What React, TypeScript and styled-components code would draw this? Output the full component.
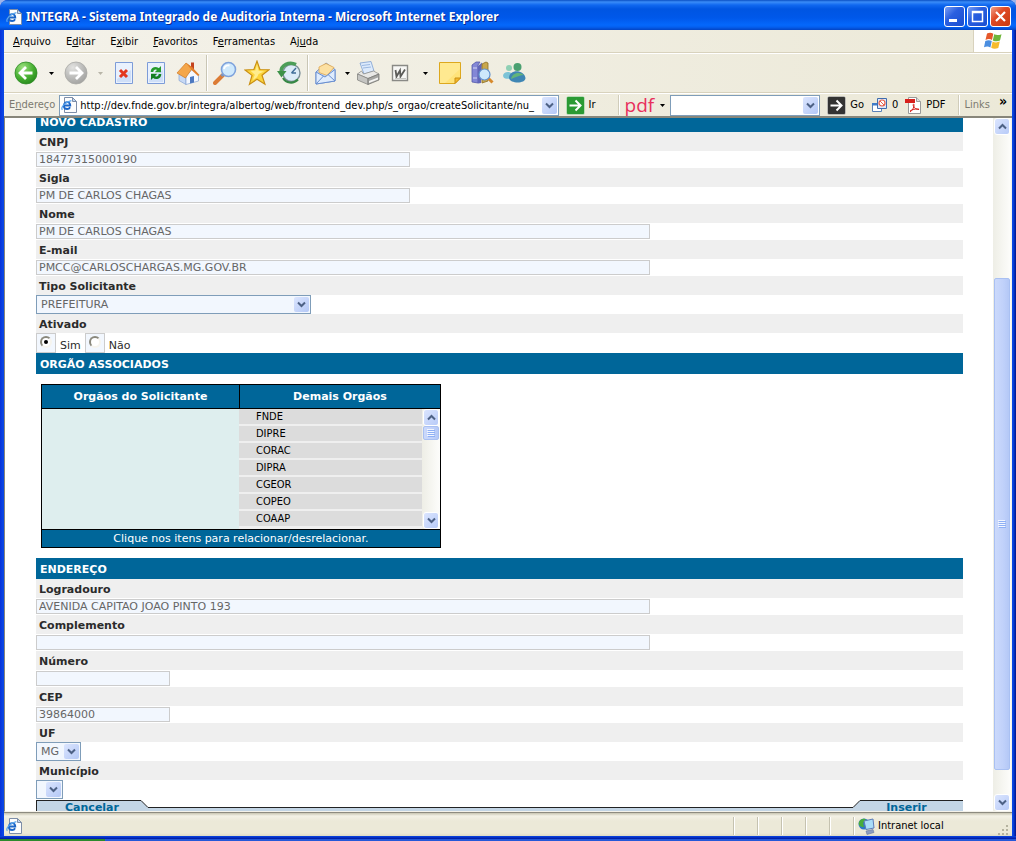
import React from "react";
import styled, { createGlobalStyle, css } from "styled-components";

const uiFont = '"DejaVu Sans Condensed", "DejaVu Sans", sans-serif';
const pageFont = '"DejaVu Sans", sans-serif';
const blue = "#006699";

const GlobalStyle = createGlobalStyle`
  *, *::before, *::after { box-sizing: border-box; }
  body { margin: 0; background: #9db4ea; }
  button, input, select { margin: 0; padding: 0; border: 0; border-radius: 0; font: inherit; color: inherit; background: none; outline: none; }
  ul { margin: 0; padding: 0; list-style: none; }
`;

/* ---------- window frame ---------- */

const Desktop = styled.div`
  height: 100vh;
  min-height: 400px;
  display: flex;
  flex-direction: column;
  overflow: hidden;
`;

const Window = styled.div`
  flex: 1;
  min-height: 0;
  display: flex;
  flex-direction: column;
  border-radius: 8px 8px 0 0;
  overflow: hidden;
  background: linear-gradient(90deg, #0831d9, #0a46e4 3px, #0a46e4 calc(100% - 3px), #00138c);
  font: 11px/14px ${uiFont};
  color: #000;
`;

const TitleBar = styled.header`
  flex: none;
  height: 30px;
  display: flex;
  align-items: center;
  gap: 4px;
  padding: 3px 5px 0 6px;
  background: linear-gradient(#0a4fc4 0, #3a8cf8 2px, #1068f0 5px, #0055e2 9px, #0058ea 18px, #0468fc 25px, #0460f0 27px, #0344c4 30px);
`;

const Title = styled.h1`
  flex: 1;
  margin: 0;
  font: bold 12px/16px "Noto Sans", sans-serif;
  color: #fff;
  text-shadow: 1px 1px 0 #0a2a90;
  white-space: nowrap;
`;

const WindowButtons = styled.div`
  display: flex;
  gap: 2px;
`;

const WindowButton = styled.button<{ $danger?: boolean }>`
  width: 21px;
  height: 21px;
  display: flex;
  border: 1px solid #fff;
  border-radius: 3px;
  background: ${(p) =>
    p.$danger
      ? "linear-gradient(135deg, #f0a088, #e04a24 40%, #c83a10)"
      : "linear-gradient(135deg, #7a9ff5, #2a5fe0 40%, #1a4ed0)"};
`;

const Frame = styled.div`
  flex: 1;
  min-height: 0;
  display: flex;
  flex-direction: column;
  margin: 0 4px;
`;

const BottomEdge = styled.div`
  flex: none;
  height: 3px;
  background: linear-gradient(#0a46e4, #0018a0);
`;

const TaskbarEdge = styled.div`
  flex: none;
  height: 2px;
  background: linear-gradient(90deg, #2c8a2c 105px, #2458d8 105px);
`;

/* ---------- bars ---------- */

const MenuBar = styled.nav`
  flex: none;
  height: 23px;
  display: flex;
  align-items: stretch;
  background: linear-gradient(90deg, #f4f2ea, #ece9d8);
  border-bottom: 1px solid #d8d2bd;
`;

const MenuItems = styled.div`
  flex: 1;
  display: flex;
  align-items: center;
  gap: 15px;
  padding: 2px 0 0 9px;
`;

const MenuItem = styled.button`
  font: 11px/14px ${uiFont};
`;

const Flag = styled.div`
  width: 39px;
  display: flex;
  align-items: center;
  justify-content: center;
  background: #fff;
  border-left: 1px solid #d8d2bd;
`;

const ToolBar = styled.div`
  flex: none;
  height: 40px;
  display: flex;
  align-items: center;
  padding-left: 6px;
  background: linear-gradient(90deg, #f4f2ea, #ece9d8);
  border-top: 1px solid #fff;
  border-bottom: 1px solid #d8d2bd;
`;

const ToolButton = styled.button`
  flex: none;
  width: 32px;
  height: 32px;
  display: flex;
  align-items: center;
  justify-content: center;
`;

const CaretButton = styled.button<{ $width: number; $off?: boolean }>`
  flex: none;
  width: ${(p) => p.$width}px;
  height: 24px;
  display: flex;
  align-items: center;
  justify-content: center;
  color: ${(p) => (p.$off ? "#b8b5a8" : "#000")};
`;

const ToolRule = styled.span`
  flex: none;
  width: 5px;
  height: 36px;
  background: linear-gradient(90deg, transparent 2px, #c9c6b5 2px, #c9c6b5 3px, #fff 3px, #fff 4px, transparent 4px);
`;

const AddressBar = styled.form`
  flex: none;
  height: 25px;
  display: flex;
  align-items: center;
  background: linear-gradient(90deg, #f2f0e6, #ece9d8);
  border-top: 1px solid #fff;
  border-bottom: 2px solid #88867a;
  white-space: nowrap;
`;

const DimText = styled.label`
  padding: 0 4px 0 5px;
  color: #7c7a70;
`;

const Combo = styled.div<{ $width?: number }>`
  ${(p) => (p.$width ? css`flex: none; width: ${p.$width}px;` : css`flex: 1; min-width: 0;`)}
  height: 21px;
  display: flex;
  align-items: center;
  padding: 1px;
  background: #fff;
  border: 1px solid #7f9db9;
`;

const ComboInput = styled.input`
  flex: 1;
  min-width: 0;
  height: 17px;
  padding-left: 3px;
`;

const DropArrow = styled.span`
  flex: none;
  width: 15px;
  height: 17px;
  display: flex;
  align-items: center;
  justify-content: center;
  border-radius: 2px;
  background: linear-gradient(135deg, #dbe5fe, #b4c8f6);
  color: #4d6185;
`;

const BarButton = styled.button`
  flex: none;
  display: flex;
  align-items: center;
  gap: 4px;
  padding-left: 7px;
`;

const PdfBrand = styled.button`
  font: 19px/20px "Open Sans", sans-serif;
  height: 24px;
  padding-left: 5px;
  color: #e8305c;
`;

const BarRule = styled.span<{ $before: number }>`
  flex: none;
  width: 2px;
  height: 20px;
  margin-left: ${(p) => p.$before}px;
  border-left: 1px solid #d0ccba;
  border-right: 1px solid #fff;
`;

const More = styled.button`
  align-self: flex-start;
  width: 18px;
  font-size: 14px;
  font-weight: bold;
  line-height: 14px;
`;

const StatusBar = styled.footer`
  flex: none;
  height: 24px;
  display: flex;
  align-items: center;
  padding: 3px 3px 0 2px;
  background: linear-gradient(#c8c5b2, #f3f1e6 3px, #ece9d8 8px, #ece9d8 20px, #dedac6);
  border-top: 1px solid #8d8b80;
`;

const StatusMain = styled.div`
  flex: 1;
  display: flex;
`;

const StatusCell = styled.div<{ $width: number }>`
  width: ${(p) => p.$width}px;
  height: 18px;
  display: flex;
  align-items: center;
  gap: 3px;
  padding-left: 4px;
  border-left: 1px solid #c5c2b0;
  box-shadow: inset 1px 0 0 #fff;
  white-space: nowrap;
`;

const Grip = styled.svg`
  flex: none;
  align-self: flex-end;
  margin-left: auto;
`;

/* ---------- scrolling ---------- */

const Viewport = styled.div`
  flex: 1;
  min-height: 0;
  display: flex;
  background: #fff;
  border-left: 1px solid #88867a;
  border-right: 1px solid #f4f2ea;
  border-bottom: 1px solid #f4f2ea;
`;

const ScrollRail = styled.div`
  flex: none;
  width: 18px;
  display: flex;
  flex-direction: column;
  padding: 0 1px;
  background: linear-gradient(90deg, #eeeee6, #fdfdfb);
`;

const ScrollButton = styled.button`
  flex: none;
  height: 17px;
  display: flex;
  align-items: center;
  justify-content: center;
  border: 1px solid #fff;
  border-radius: 3px;
  background: linear-gradient(135deg, #dbe5fe, #b8cbf8);
  color: #4d6185;
`;

const RailSpace = styled.div<{ $part: number }>`
  flex: ${(p) => p.$part} 1 0;
`;

const Thumb = styled.div<{ $part: number }>`
  flex: ${(p) => p.$part} 1 0;
  min-height: 12px;
  display: flex;
  align-items: center;
  justify-content: center;
  border: 1px solid #a9c0f2;
  border-radius: 2px;
  background: linear-gradient(90deg, #cbd9fb, #c0d1fa 60%, #b4c8f6);
`;

/* ---------- page ---------- */

const Page = styled.main`
  flex: 1;
  min-width: 0;
  overflow: hidden;
  padding: 0 30px 0 31px;
  font: 11px/14px ${pageFont};
  color: #2b2b2b;
`;

const Form = styled.form`
  margin-top: -7px;
`;

const SectionTitle = styled.h2`
  height: 21px;
  margin: 0;
  padding-left: 4px;
  font: bold 11px/23px ${pageFont};
  color: #fff;
  background: ${blue};
`;

const FieldLabel = styled.label`
  display: block;
  height: 19px;
  padding-left: 3px;
  font-weight: bold;
  line-height: 21px;
  background: #efefef;
`;

const TextField = styled.input<{ $width: number }>`
  display: block;
  width: ${(p) => p.$width}px;
  max-width: 100%;
  height: 15px;
  margin: 1px 0;
  padding: 0 2px;
  border: 1px solid #ccc;
  background: #f2f7fe;
  color: #666;
`;

const SelectBox = styled.div<{ $width: number }>`
  position: relative;
  width: ${(p) => p.$width}px;
  max-width: 100%;
  height: 19px;
  border: 1px solid #7f9db9;
  background: #f2f7fe;

  select {
    display: block;
    width: 100%;
    height: 17px;
    padding: 1px 0 0 4px;
    appearance: none;
    color: #666;
  }

  ${DropArrow} {
    position: absolute;
    top: 1px;
    right: 1px;
    height: 15px;
    pointer-events: none;
  }
`;

const RadioRow = styled.div`
  height: 20px;
  display: flex;
  gap: 4px;
  line-height: 25px;
`;

const Radio = styled.input`
  position: relative;
  width: 20px;
  height: 20px;
  appearance: none;
  border: 1px solid #ccc;
  background: #f2f7fe;

  &::before {
    content: "";
    position: absolute;
    left: 3px;
    top: 2px;
    width: 12px;
    height: 12px;
    border: 2px solid #8a887c;
    border-right-color: #f6f4ee;
    border-bottom-color: #f6f4ee;
    border-radius: 50%;
    background: #fff;
  }

  &:checked::after {
    content: "";
    position: absolute;
    left: 7px;
    top: 6px;
    width: 4px;
    height: 4px;
    border-radius: 50%;
    background: #000;
  }
`;

const Picker = styled.table`
  width: 400px;
  max-width: 100%;
  margin: 10px 5px;
  border: 1px solid #000;
  border-spacing: 0;
  table-layout: fixed;

  th, td { padding: 0; vertical-align: top; }
  th { height: 23px; line-height: 23px; color: #fff; background: ${blue}; }
  th:first-child { width: 197px; }
  th + th { border-left: 1px solid #000; }
  tbody td { height: 122px; border: solid #000; border-width: 1px 0; }
  tfoot td { height: 17px; line-height: 17px; text-align: center; color: #fff; background: ${blue}; }
`;

const ChosenCell = styled.td`
  background: #deeeee;
`;

const ListPane = styled.div`
  display: flex;
  height: 120px;
`;

const List = styled.ul`
  flex: 1;
  background: #efefef;
`;

const ListItem = styled.button`
  display: block;
  width: 100%;
  height: 17px;
  padding: 1px 0 0 17px;
  border-bottom: 2px solid #efefef;
  background: #dcdcdc;
  font: 11px/14px ${uiFont};
  color: #000;
  text-align: left;
`;

const Actions = styled.div`
  display: flex;
  height: 30px;
  margin-top: 1px;
`;

const ActionTab = styled.button<{ $edge: "left" | "right" }>`
  width: ${(p) => (p.$edge === "left" ? 105 : 103)}px;
  padding: ${(p) => (p.$edge === "left" ? "0 0 0 6px" : "0 10px 0 0")};
  border-top: 1px solid #222;
  ${(p) => p.$edge === "left" && css`border-left: 1px solid #222;`}
  background: #c3d5e5;
  font: bold 11px/14px ${pageFont};
  color: ${blue};
  display: flex;
  justify-content: center;
`;

const ActionLine = styled.div`
  flex: 1;
  margin-top: 7px;
  border-top: 1px solid #222;
  background: #c3d5e5;
`;

/* ---------- drawings ---------- */

const Caret = () => (
  <svg width="5" height="3" viewBox="0 0 5 3"><path d="M0 0h5L2.500 3z" fill="currentColor" /></svg>
);

const Chevron = ({ up }: { up?: boolean }) => (
  <svg width="9" height="7" viewBox="0 0 9 7">
    <path d={up ? "M1 5.500 4.500 2 8 5.500" : "M1 1.500 4.500 5 8 1.500"} fill="none" stroke="currentColor" strokeWidth="2" />
  </svg>
);

const ThumbLines = () => (
  <svg width="8" height="8" viewBox="0 0 8 8">
    <path d="M0 .5h7M0 2.500h7M0 4.500h7M0 6.500h7" stroke="#f2f6ff" />
    <path d="M1 1.500h7M1 3.500h7M1 5.500h7M1 7.500h7" stroke="#8fb0f5" />
  </svg>
);

const IePage = () => (
  <svg width="16" height="16" viewBox="0 0 16 16">
    <path d="M3.500.5h8l4 4v11h-12z" fill="#fdfdfd" stroke="#7e8ea8" />
    <path d="M11.500.5v4h4z" fill="#bcd4f4" stroke="#7e8ea8" />
    <path d="M3 8.500h6.300c0-2-1.200-3.300-3.100-3.300S2.800 6.700 2.800 8.700s1.400 3.300 3.400 3.300c1.400 0 2.300-.6 2.900-1.700" fill="none" stroke="#1c66c8" strokeWidth="1.800" />
    <path d="M1.400 12.800c-2-2 2.500-8 9-9.200" fill="none" stroke="#5aa5ec" strokeWidth="1.200" />
  </svg>
);

const FlagIcon = () => (
  <svg width="19" height="18" viewBox="0 0 19 18">
    <path d="M3 1.500c2.500-1.300 4.500-.9 6.300.2L8 8C6.200 6.900 4 6.700 1.500 8z" fill="#e5582b" />
    <path d="M10.200 2.200c2 1 4.300 1.200 7.300 0L16 8.600c-2.700 1.200-5 .9-7.200-.2z" fill="#6fb53a" />
    <path d="M1.300 9c2.500-1.300 4.700-1 6.500.1l-1.400 6.300C4.600 14.300 2.500 14 0 15.300z" fill="#4a8ee0" />
    <path d="M8.600 9.500c2 1.100 4.300 1.300 7.200.1l-1.500 6.300c-2.800 1.200-5 1-7.100-.1z" fill="#f6bb2c" />
  </svg>
);

const RoundArrow = ({ forward }: { forward?: boolean }) => (
  <svg width="24" height="24" viewBox="0 0 24 24">
    <defs>
      <radialGradient id={forward ? "fw" : "bk"} cx=".35" cy=".25" r=".9">
        <stop offset="0" stopColor={forward ? "#e2e2e0" : "#9be07e"} />
        <stop offset=".55" stopColor={forward ? "#b9b9b7" : "#45ae30"} />
        <stop offset="1" stopColor={forward ? "#9a9a98" : "#1f7e18"} />
      </radialGradient>
    </defs>
    <circle cx="12" cy="12" r="11" fill={`url(#${forward ? "fw" : "bk"})`} stroke={forward ? "#a9a9a6" : "#2f8c26"} strokeWidth=".8" />
    <path
      d={forward ? "M5.500 12h12M12 6l6 6-6 6" : "M18.500 12h-12M12 6l-6 6 6 6"}
      fill="none" stroke="#fff" strokeWidth="2.800"
    />
  </svg>
);

const Sheet = () => (
  <>
    <path d="M3.500 1.500h17v21h-17z" fill="#e9f1fd" stroke="#7d9cd8" />
    <path d="M5 21h14V9L5 18z" fill="#cfdff8" />
  </>
);

const StopIcon = () => (
  <svg width="24" height="24" viewBox="0 0 24 24"><Sheet /><path d="m8 9 7 7m0-7-7 7" stroke="#e3371e" strokeWidth="3" /></svg>
);

const RefreshIcon = () => (
  <svg width="24" height="24" viewBox="0 0 24 24">
    <Sheet />
    <path d="M8 11c0-3.500 4-5 6.500-2.500" fill="none" stroke="#259a2c" strokeWidth="2.600" />
    <path d="M17 5v6.300h-6.300z" fill="#259a2c" />
    <path d="M16 13c0 3.500-4 5-6.500 2.500" fill="none" stroke="#158022" strokeWidth="2.600" />
    <path d="M7 19v-6.300h6.300z" fill="#158022" />
  </svg>
);

const HomeIcon = () => (
  <svg width="24" height="24" viewBox="0 0 24 24">
    <path d="M15 1.500h3v7h-3z" fill="#c4431e" />
    <path d="m3 13 7 4v6.500l-7-4z" fill="#c7d9f5" stroke="#86a3d4" strokeWidth=".7" />
    <path d="m10 15 6-6.500 6.500 5V20L10 23.500z" fill="#f4f8ff" stroke="#86a3d4" strokeWidth=".7" />
    <path d="m1 12 9-10 6.500 5L9.500 17z" fill="#f4a64a" stroke="#d07b26" strokeWidth=".7" />
    <path d="m10 2 6.500 4.500 7 7.500-1.500 1-6-5.500z" fill="#e2802b" />
    <path d="m14 16 4-1v6.500l-4 1z" fill="#4c78bf" />
  </svg>
);

const SearchIcon = () => (
  <svg width="24" height="24" viewBox="0 0 24 24">
    <path d="m10 14-8 8" stroke="#dc7c35" strokeWidth="4" strokeLinecap="round" />
    <path d="m11 12.500-2.500 2.500" stroke="#8294b8" strokeWidth="3" />
    <circle cx="15.500" cy="8.500" r="7" fill="#cfe9fc" stroke="#7fa3dc" strokeWidth="1.600" />
    <path d="M11 8c.5-2.500 3-4 5.500-3.500" fill="none" stroke="#fff" strokeWidth="2" />
  </svg>
);

const StarIcon = () => (
  <svg width="26" height="26" viewBox="0 0 24 24">
    <path d="m12 1 2.700 7.800 8.300.2-6.400 5.100 2.700 8.200L12 17.800l-7 4.700 2.400-8.300L1 9.200l8.100-.4z" fill="#fcd53c" stroke="#c98f14" strokeWidth="1.100" />
    <path d="m12 4 1.500 6 5 .5-5 2.500-1.500 3-4 2.500 2-5-4-3.500 4.500-.3z" fill="#fff2a0" opacity=".8" />
  </svg>
);

const HistoryIcon = () => (
  <svg width="24" height="24" viewBox="0 0 24 24">
    <circle cx="14.500" cy="12" r="8.500" fill="#dcebf7" stroke="#7b8f98" strokeWidth="1.400" />
    <path d="M14.500 12 19 7m-4.500 5h4.500" stroke="#3f6d98" strokeWidth="1.400" />
    <path d="M19 3.500C12 0 4 4 4 11" fill="none" stroke="#4c9e58" strokeWidth="3.500" />
    <path d="M0 10h9.500l-5 6.500z" fill="#3c9148" />
    <path d="M6 17c3 5 10 6.500 15 1.500" fill="none" stroke="#378845" strokeWidth="2.200" />
  </svg>
);

const MailIcon = () => (
  <svg width="24" height="24" viewBox="0 0 24 24">
    <path d="m2 11 10-9 9 6.500V20L2 23z" fill="#bed7f8" stroke="#6a8fd0" />
    <path d="m5 6 7-3.500 8 4-7 8-8-3z" fill="#fce0a2" stroke="#e0a64c" strokeWidth=".8" />
    <path d="m2 11 9 5 10-7.500V20L2 23z" fill="#dfecfd" stroke="#6a8fd0" />
    <path d="m2 23 7.500-8M21 20l-7-6.500" stroke="#6a8fd0" fill="none" />
  </svg>
);

const PrintIcon = () => (
  <svg width="24" height="24" viewBox="0 0 24 24">
    <path d="m4 2 11-1.500L18 10 8 13z" fill="#dceafc" stroke="#7d9fd2" strokeWidth=".8" />
    <path d="M6 4.500 14 3.500M7 7l8-1" stroke="#9bb8e0" />
    <path d="m1.500 13 4-3 2 3 10-3 5.500 3-11 4.500z" fill="#e8e8e6" stroke="#8f8f8c" strokeWidth=".8" />
    <path d="m1.500 13 10.500 4.500v6L1.500 19z" fill="#c5c5c2" stroke="#858582" strokeWidth=".8" />
    <path d="M12 17.500 23 13v6l-11 4.500z" fill="#a5a5a2" stroke="#777774" strokeWidth=".8" />
    <path d="m13 20 9-3.500v2L13 22z" fill="#f4f4f2" />
  </svg>
);

const WordIcon = () => (
  <svg width="18" height="18" viewBox="0 0 18 18">
    <path d="M1.500 1.500h15v15h-15z" fill="#f7f7f5" stroke="#8a8a86" strokeWidth="1.400" />
    <path d="M4.500 6 5.500 12.500 9 6.500 9.500 12.500 14 5.500" fill="none" stroke="#5b5b58" strokeWidth="1.800" />
    <path d="M4 14.500h11" stroke="#c4c4c0" />
  </svg>
);

const NoteIcon = () => (
  <svg width="24" height="24" viewBox="0 0 24 24">
    <path d="M1.500 1.500h21V17L17 22.500H1.500z" fill="#ffe37a" stroke="#dda81e" />
    <path d="M2 2h20v6L7 22H2z" fill="#ffeb9a" opacity=".7" />
    <path d="M22.500 17H17v5.500z" fill="#f5b92c" stroke="#c98f14" />
  </svg>
);

const ResearchIcon = () => (
  <svg width="24" height="24" viewBox="0 0 24 24">
    <path d="m2 4 4-3h4l-2 3v18l-6-1z" fill="#8387d6" stroke="#5358a8" strokeWidth=".8" />
    <path d="m8 5 4-3.500L11 22l-3 .5z" fill="#6166b8" />
    <path d="m12 3 4-2 2 1v18l-6 2z" fill="#c9a74c" stroke="#8d6f24" strokeWidth=".8" />
    <path d="M3 7h4M3 17h4" stroke="#d5d7f5" />
    <path d="m18 17 4.500 4.500" stroke="#d78a2c" strokeWidth="3" />
    <circle cx="14.500" cy="13.500" r="5.500" fill="#cde8fb" stroke="#5f8fcc" strokeWidth="1.200" />
  </svg>
);

const MessengerIcon = () => (
  <svg width="24" height="24" viewBox="0 0 24 24">
    <path d="M1 15c0-5 9-5.500 10 0 0 3-9 4.500-10 0z" fill="#7cc3d6" />
    <circle cx="7" cy="7" r="3" fill="#8fd0b4" />
    <path d="M7 17c0-9 15-9 16.500 0 0 6-15.500 6-16.500 0z" fill="#3f86b4" />
    <path d="M9 18c1-6 8-8 13-4-3 0-8 2-13 4z" fill="#62b47a" />
    <circle cx="15.500" cy="6" r="4" fill="#4aa070" />
  </svg>
);

const GoIcon = ({ fill }: { fill: string }) => (
  <svg width="19" height="19" viewBox="0 0 19 19">
    <rect x=".5" y=".5" width="18" height="18" rx="1.500" fill={fill} stroke="#fff" strokeOpacity=".4" />
    <path d="M3.500 9.500h11M9.500 4.500l5 5-5 5" fill="none" stroke="#fff" strokeWidth="2" />
  </svg>
);

const PopupIcon = () => (
  <svg width="17" height="17" viewBox="0 0 17 17">
    <path d="M1.500 6.500h9v8h-9z" fill="#fff" stroke="#5b82b8" /><path d="M1 6h10v2.500H1z" fill="#3f7cc8" />
    <path d="M6.500 1.500h9v10h-9z" fill="#dfe9f8" stroke="#3f6cae" />
    <circle cx="11" cy="6" r="3" fill="#fff" stroke="#e8604a" strokeWidth="1.200" /><path d="m9 4 4 4" stroke="#e8604a" />
  </svg>
);

const AcrobatIcon = () => (
  <svg width="17" height="17" viewBox="0 0 17 17">
    <path d="M3.500.5h8l4 4v12h-12z" fill="#fff" stroke="#9a9a9a" />
    <path d="M11.500.5v4h4" fill="#ddd" stroke="#9a9a9a" />
    <path d="M0 2h10v4H0z" fill="#d8201c" />
    <path d="M5 15c2-1 4.500-5 4-7.500-.3-1-1.300 0-.6 1.500C9.200 11 12 13 14 12.500c.5-1-6-.8-9 1.500" fill="none" stroke="#d8201c" />
  </svg>
);

const IntranetIcon = () => (
  <svg width="17" height="17" viewBox="0 0 17 17">
    <circle cx="6" cy="6" r="5.500" fill="#2c78cc" />
    <path d="M1 4C3 0 7 0 8 2L5 5l1 4C2 9 0 7 1 4z" fill="#48ac3c" />
    <path d="m6 3 9-2 1 9-8 1.500z" fill="#a9dcf8" stroke="#5c7cb8" />
    <path d="m8 13 7-1.500 1 3-7 2z" fill="#8a9bc0" stroke="#6477a0" strokeWidth=".6" />
  </svg>
);

const GripDots = () => (
  <Grip width="12" height="12" viewBox="0 0 12 12" fill="#b5b29f">
    <path d="M9 1h2v2H9zM9 5h2v2H9zM9 9h2v2H9zM5 5h2v2H5zM5 9h2v2H5zM1 9h2v2H1z" />
  </Grip>
);

const Slope = ({ down }: { down?: boolean }) => (
  <svg width="7" height="30" viewBox="0 0 7 30">
    <path d={down ? "M0 .5 7 7.500V30H0z" : "M7 .5 0 7.500V30h7z"} fill="#c3d5e5" />
    <path d={down ? "M0 .5 7 7.500" : "M7 .5 0 7.500"} stroke="#222" />
  </svg>
);

/* ---------- composed parts ---------- */

const menus: [string, string, string][] = [
  ["", "A", "rquivo"], ["E", "d", "itar"], ["E", "x", "ibir"],
  ["", "F", "avoritos"], ["F", "e", "rramentas"], ["Aj", "u", "da"],
];

const Field = ({ id, label, width, value = "" }: { id: string; label: string; width: number; value?: string }) => (
  <>
    <FieldLabel htmlFor={id}>{label}</FieldLabel>
    <TextField id={id} $width={width} defaultValue={value} />
  </>
);

const SelectField = ({ id, label, width, value }: { id: string; label: string; width: number; value: string }) => (
  <>
    <FieldLabel htmlFor={id}>{label}</FieldLabel>
    <SelectBox $width={width}>
      <select id={id} defaultValue={value}><option>{value}</option></select>
      <DropArrow><Chevron /></DropArrow>
    </SelectBox>
  </>
);

const ScrollBar = ({ before, thumb, after }: { before: number; thumb: number; after: number }) => (
  <ScrollRail>
    <ScrollButton type="button" aria-label="Rolar para cima"><Chevron up /></ScrollButton>
    <RailSpace $part={before} />
    <Thumb $part={thumb}><ThumbLines /></Thumb>
    <RailSpace $part={after} />
    <ScrollButton type="button" aria-label="Rolar para baixo"><Chevron /></ScrollButton>
  </ScrollRail>
);

const orgaos = ["FNDE", "DIPRE", "CORAC", "DIPRA", "CGEOR", "COPEO", "COAAP"];

export default function App() {
  return (
    <Desktop>
      <GlobalStyle />
      <Window>
        <TitleBar>
          <IePage />
          <Title>INTEGRA - Sistema Integrado de Auditoria Interna - Microsoft Internet Explorer</Title>
          <WindowButtons>
            <WindowButton aria-label="Minimizar">
              <svg width="19" height="19"><path d="M4 12h8v3H4z" fill="#fff" /></svg>
            </WindowButton>
            <WindowButton aria-label="Maximizar">
              <svg width="19" height="19"><path d="M4.500 4.500h10v10h-10zM4 5.500h11" fill="none" stroke="#fff" strokeWidth="1.500" /></svg>
            </WindowButton>
            <WindowButton $danger aria-label="Fechar">
              <svg width="19" height="19"><path d="m5 5 9 9m0-9-9 9" stroke="#fff" strokeWidth="2.200" /></svg>
            </WindowButton>
          </WindowButtons>
        </TitleBar>
        <Frame>
          <MenuBar>
            <MenuItems>
              {menus.map(([a, key, b]) => (
                <MenuItem key={a + key + b}>{a}<u>{key}</u>{b}</MenuItem>
              ))}
            </MenuItems>
            <Flag><FlagIcon /></Flag>
          </MenuBar>
          <ToolBar>
            <ToolButton aria-label="Voltar"><RoundArrow /></ToolButton>
            <CaretButton $width={18} aria-label="Histórico anterior"><Caret /></CaretButton>
            <ToolButton aria-label="Avançar"><RoundArrow forward /></ToolButton>
            <CaretButton $width={16} $off aria-label="Histórico seguinte"><Caret /></CaretButton>
            <ToolButton aria-label="Parar"><StopIcon /></ToolButton>
            <ToolButton aria-label="Atualizar"><RefreshIcon /></ToolButton>
            <ToolButton aria-label="Página inicial"><HomeIcon /></ToolButton>
            <ToolRule />
            <ToolButton aria-label="Pesquisar"><SearchIcon /></ToolButton>
            <ToolButton aria-label="Favoritos"><StarIcon /></ToolButton>
            <ToolButton aria-label="Histórico"><HistoryIcon /></ToolButton>
            <ToolRule />
            <ToolButton aria-label="Correio"><MailIcon /></ToolButton>
            <CaretButton $width={10} aria-label="Opções de correio"><Caret /></CaretButton>
            <ToolButton aria-label="Imprimir"><PrintIcon /></ToolButton>
            <ToolButton aria-label="Editar no Word"><WordIcon /></ToolButton>
            <CaretButton $width={18} aria-label="Opções de edição"><Caret /></CaretButton>
            <ToolButton aria-label="Discutir"><NoteIcon /></ToolButton>
            <ToolButton aria-label="Pesquisa"><ResearchIcon /></ToolButton>
            <ToolButton aria-label="Messenger"><MessengerIcon /></ToolButton>
          </ToolBar>
          <AddressBar>
            <DimText htmlFor="url">E<u>n</u>dereço</DimText>
            <Combo>
              <IePage />
              <ComboInput id="url" defaultValue="http://dev.fnde.gov.br/integra/albertog/web/frontend_dev.php/s_orgao/createSolicitante/nu_" />
              <DropArrow><Chevron /></DropArrow>
            </Combo>
            <BarButton type="button"><GoIcon fill="#2b9a34" />Ir</BarButton>
            <BarRule $before={22} />
            <PdfBrand type="button">pdf</PdfBrand>
            <CaretButton type="button" $width={16} aria-label="Opções de pdf"><Caret /></CaretButton>
            <Combo $width={150}>
              <ComboInput aria-label="Pesquisar" />
              <DropArrow><Chevron /></DropArrow>
            </Combo>
            <BarButton type="button"><GoIcon fill="#333" />Go</BarButton>
            <BarButton type="button"><PopupIcon />0</BarButton>
            <BarButton type="button"><AcrobatIcon />PDF</BarButton>
            <BarRule $before={12} />
            <DimText as="span">Links</DimText>
            <More type="button">»</More>
          </AddressBar>
          <Viewport>
            <Page>
              <Form>
                <SectionTitle>NOVO CADASTRO</SectionTitle>
                <Field id="cnpj" label="CNPJ" width={374} value="18477315000190" />
                <Field id="sigla" label="Sigla" width={374} value="PM DE CARLOS CHAGAS" />
                <Field id="nome" label="Nome" width={614} value="PM DE CARLOS CHAGAS" />
                <Field id="email" label="E-mail" width={614} value="PMCC@CARLOSCHARGAS.MG.GOV.BR" />
                <SelectField id="tipo" label="Tipo Solicitante" width={275} value="PREFEITURA" />
                <FieldLabel as="div" id="ativado">Ativado</FieldLabel>
                <RadioRow role="radiogroup" aria-labelledby="ativado">
                  <Radio type="radio" name="ativado" id="sim" defaultChecked />
                  <label htmlFor="sim">Sim</label>
                  <Radio type="radio" name="ativado" id="nao" />
                  <label htmlFor="nao">Não</label>
                </RadioRow>
                <SectionTitle>ORGÃO ASSOCIADOS</SectionTitle>
                <Picker>
                  <thead>
                    <tr><th>Orgãos do Solicitante</th><th>Demais Orgãos</th></tr>
                  </thead>
                  <tfoot>
                    <tr><td colSpan={2}>Clique nos itens para relacionar/desrelacionar.</td></tr>
                  </tfoot>
                  <tbody>
                    <tr>
                      <ChosenCell />
                      <td>
                        <ListPane>
                          <List>
                            {orgaos.map((name) => (
                              <li key={name}><ListItem type="button">{name}</ListItem></li>
                            ))}
                          </List>
                          <ScrollBar before={0} thumb={12} after={74} />
                        </ListPane>
                      </td>
                    </tr>
                  </tbody>
                </Picker>
                <SectionTitle>ENDEREÇO</SectionTitle>
                <Field id="logradouro" label="Logradouro" width={614} value="AVENIDA CAPITAO JOAO PINTO 193" />
                <Field id="complemento" label="Complemento" width={614} />
                <Field id="numero" label="Número" width={134} />
                <Field id="cep" label="CEP" width={134} value="39864000" />
                <SelectField id="uf" label="UF" width={45} value="MG" />
                <SelectField id="municipio" label="Município" width={27} value="" />
                <Actions>
                  <ActionTab type="button" $edge="left">Cancelar</ActionTab>
                  <Slope down />
                  <ActionLine />
                  <Slope />
                  <ActionTab type="button" $edge="right">Inserir</ActionTab>
                </Actions>
              </Form>
            </Page>
            <ScrollBar before={144} thumb={493} after={24} />
          </Viewport>
          <StatusBar>
            <StatusMain><IePage /></StatusMain>
            <StatusCell $width={24} />
            <StatusCell $width={24} />
            <StatusCell $width={24} />
            <StatusCell $width={24} />
            <StatusCell $width={24} />
            <StatusCell $width={144}><IntranetIcon />Intranet local</StatusCell>
            <GripDots />
          </StatusBar>
        </Frame>
        <BottomEdge />
      </Window>
      <TaskbarEdge />
    </Desktop>
  );
}
